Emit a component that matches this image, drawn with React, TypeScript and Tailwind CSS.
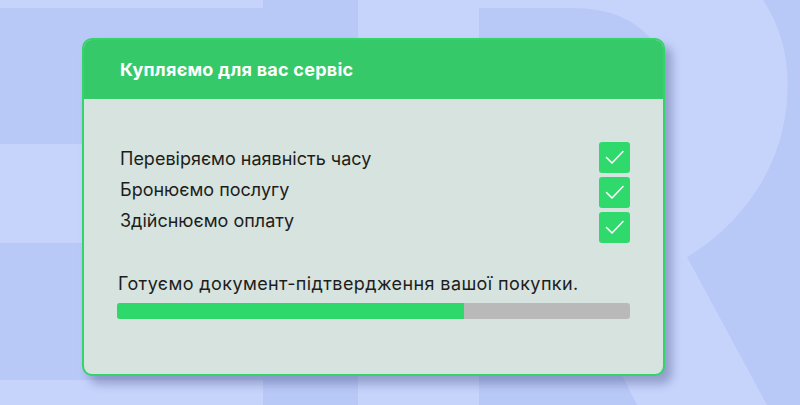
const steps = ['Перевіряємо наявність часу', 'Бронюємо послугу', 'Здійснюємо оплату']

// фоновий логотип
function Backdrop() {
  return (
    <svg className="absolute inset-0" width="800" height="405" viewBox="0 0 800 405">
      <g fill="#b8c8f7">
        <rect x="0" y="8" width="358" height="136" />
        <rect x="263" y="0" width="95" height="405" />
        <rect x="0" y="243" width="358" height="137" />
        <path d="M479,8 H573 C610,8 635,20 652,40 L652,220 L479,220 Z" />
        <path d="M479,260 L564,260 L637,405 L479,405 Z" />
        <path d="M763,0 C783,30 790,65 787,100 C782,170 740,225 687,257 L767,405 H800 V0 Z" />
      </g>
    </svg>
  )
}

function CheckBox() {
  return (
    <div className="w-[31px] h-[31px] rounded-[3px] bg-[#2fd96b] flex items-center justify-center">
      <svg width="31" height="31" viewBox="0 0 31 31" fill="none">
        <path d="M7.5 15.5 L13 21 L24 9.5" stroke="white" strokeWidth="1.6" strokeLinecap="round" strokeLinejoin="round" />
      </svg>
    </div>
  )
}

function App() {
  const progress = 67.6
  return (
    <div className="relative w-[800px] h-[405px] overflow-hidden bg-[#c6d4fc] font-['Inter',sans-serif]">
      <Backdrop />
      <div className="relative pt-[38px] pl-[82px]">
        <div className="w-[583px] h-[338px] rounded-[10px] border-2 border-[#33d46a] bg-[#d6e3de] overflow-hidden shadow-[7px_8px_10px_rgba(70,80,130,0.4)]">
          <div className="h-[59px] bg-[#36c969] flex items-center pl-[36px]">
            <h1 className="text-white text-[18px] font-bold tracking-[0.25px]">Купляємо для вас сервіс</h1>
          </div>
          <div className="pt-[44px] pl-[34px] pr-[33px]">
            <div className="flex justify-between items-start">
              <div className="pl-[2px] text-[18px] leading-[31px] text-[#1d1d1d]">
                {steps.map((s) => (
                  <div key={s}>{s}</div>
                ))}
              </div>
              <div className="flex flex-col gap-[4px] -mt-[1px]">
                {steps.map((s) => (
                  <CheckBox key={s} />
                ))}
              </div>
            </div>
            <p className="mt-[29px] text-[18px] leading-[24px] tracking-[0.4px] text-[#1d1d1d]">
              Готуємо документ-підтвердження вашої покупки.
            </p>
            <div className="mt-[7px] -ml-[1px] h-[16px] rounded-[3px] bg-[#b9b9b9] overflow-hidden">
              <div className="h-full bg-[#2fd86b]" style={{ width: `${progress}%` }} />
            </div>
          </div>
        </div>
      </div>
    </div>
  )
}

export default App
